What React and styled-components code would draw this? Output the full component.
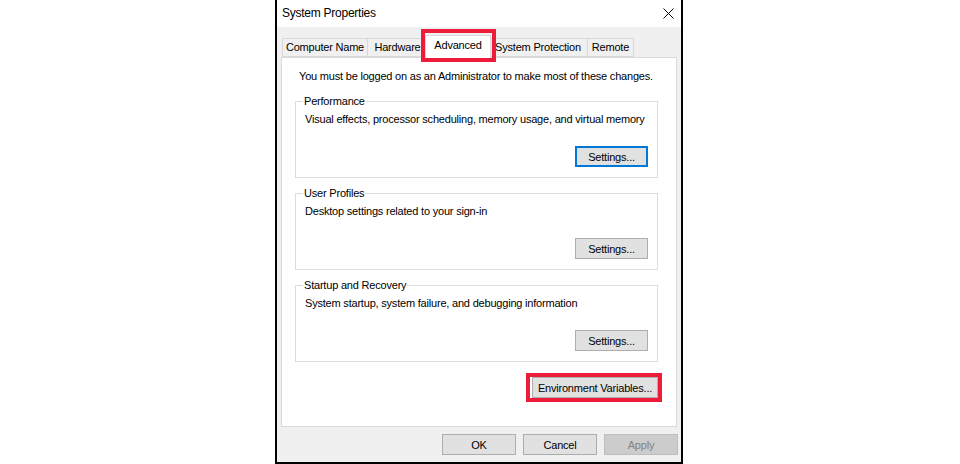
import styled, { createGlobalStyle } from 'styled-components';

const GlobalStyle = createGlobalStyle`
    html, body {
        margin: 0;
        padding: 0;
        background: #fff;
    }
    body {
        font-family: "Liberation Sans", Arial, sans-serif;
        font-size: 11px;
        letter-spacing: -0.2px;
        color: #000;
    }
`;

const Page = styled.div`
    width: 960px;
    height: 464px;
    padding-left: 275px;
    box-sizing: border-box;
    overflow: hidden;
`;

const Window = styled.div`
    width: 408px;
    height: 464px;
    box-sizing: border-box;
    border: 2px solid #000;
    border-top: none;
    background: #f0f0f0;
    display: flex;
    flex-direction: column;
`;

const TitleBar = styled.div`
    height: 27px;
    background: #fff;
    display: flex;
    align-items: center;
    justify-content: space-between;
    padding: 0 7px 0 5px;
`;

const Title = styled.span`
    font-size: 12px;
    letter-spacing: -0.25px;
    line-height: 15px;
`;

const Body = styled.div`
    flex: 1;
    display: flex;
    flex-direction: column;
    padding: 8px 4px 7px 4px;
`;

const TabRow = styled.div`
    display: flex;
    align-items: flex-end;
    height: 23px;
    padding-left: 1px;
    margin-bottom: -1px;
    position: relative;
    z-index: 1;
`;

const Tab = styled.div`
    position: relative;
    box-sizing: border-box;
    width: ${p => p.$w}px;
    height: ${p => (p.$active ? 23 : 19)}px;
    margin-bottom: ${p => (p.$active ? 0 : 1)}px;
    margin-left: ${p => (p.$first ? 0 : p.$active ? -3 : -1)}px;
    margin-right: ${p => (p.$active ? -2 : 0)}px;
    padding-bottom: ${p => (p.$active ? 4 : 1)}px;
    border: 1px solid #d9d9d9;
    border-bottom: ${p => (p.$active ? 'none' : '1px solid #d9d9d9')};
    background: ${p => (p.$active ? '#fff' : '#f0f0f0')};
    z-index: ${p => (p.$active ? 2 : 0)};
    display: flex;
    align-items: center;
    justify-content: center;
    white-space: nowrap;
    line-height: 15px;
`;

const Highlight = styled.span`
    position: absolute;
    left: ${p => p.$l}px;
    right: ${p => p.$r}px;
    top: ${p => p.$t}px;
    bottom: ${p => p.$b}px;
    border: 4px solid #ed1c3a;
    pointer-events: none;
`;

const Panel = styled.div`
    height: 370px;
    box-sizing: border-box;
    background: #fff;
    border: 1px solid #d9d9d9;
    padding: 11px 18px 0 13px;
    display: flex;
    flex-direction: column;
`;

const Notice = styled.p`
    margin: 0 0 0 4px;
    line-height: 15px;
    white-space: nowrap;
`;

const Group = styled.fieldset`
    margin: ${p => p.$top}px 0 0 0;
    padding: 0 9px 10px 9px;
    border: 1px solid #dcdcdc;
    min-width: 0;
    display: flex;
    flex-direction: column;
`;

const Legend = styled.legend`
    margin-left: -2px;
    padding: 0 1px;
    line-height: 16px;
`;

const Description = styled.p`
    margin: 3px 0 0 0;
    line-height: 15px;
    white-space: nowrap;
`;

const ButtonRow = styled.div`
    display: flex;
    justify-content: flex-end;
    margin-top: ${p => p.$top || 0}px;
    gap: 7px;
`;

const Button = styled.button`
    position: relative;
    box-sizing: border-box;
    width: ${p => p.$w || 74}px;
    height: 21px;
    padding: 0;
    font-family: "Liberation Sans", Arial, sans-serif;
    font-size: 11px;
    letter-spacing: -0.2px;
    white-space: nowrap;
    color: ${p => (p.disabled ? '#838383' : '#000')};
    background: ${p => (p.disabled ? '#cccccc' : '#e1e1e1')};
    border: ${p => (p.$focused ? '2px solid #0078d7' : p.disabled ? '1px solid #bfbfbf' : '1px solid #adadad')};
    border-radius: 0;
    outline: none;
`;

const Footer = styled.div`
    display: flex;
    justify-content: flex-end;
    gap: 7px;
    margin-top: 7px;
    margin-right: -1px;
`;

const CloseIcon = () => (
    <svg width="11" height="11" viewBox="0 0 11 11">
        <path d="M0.5 0.5 L10.5 10.5 M10.5 0.5 L0.5 10.5" stroke="#000" strokeWidth="1" fill="none" />
    </svg>
);

const tabs = [
    { label: 'Computer Name', w: 86 },
    { label: 'Hardware', w: 61 },
    { label: 'Advanced', w: 66, active: true },
    { label: 'System Protection', w: 100 },
    { label: 'Remote', w: 47 },
];

const groups = [
    { title: 'Performance', text: 'Visual effects, processor scheduling, memory usage, and virtual memory', focused: true, top: 9 },
    { title: 'User Profiles', text: 'Desktop settings related to your sign-in', top: 7 },
    { title: 'Startup and Recovery', text: 'System startup, system failure, and debugging information', top: 7 },
];

function App() {
    return <Page>
        <GlobalStyle />
        <Window>
            <TitleBar>
                <Title>System Properties</Title>
                <CloseIcon />
            </TitleBar>
            <Body>
                <TabRow>
                    {tabs.map((t, i) => (
                        <Tab key={t.label} $w={t.w} $active={t.active} $first={i === 0}>
                            {t.label}
                            {t.active && <Highlight $l={-5} $r={-6} $t={-7} $b={-4} />}
                        </Tab>
                    ))}
                </TabRow>
                <Panel>
                    <Notice>You must be logged on as an Administrator to make most of these changes.</Notice>
                    {groups.map(g => (
                        <Group key={g.title} $top={g.top}>
                            <Legend>{g.title}</Legend>
                            <Description>{g.text}</Description>
                            <ButtonRow $top={19}>
                                <Button $w={73} $focused={g.focused}>Settings...</Button>
                            </ButtonRow>
                        </Group>
                    ))}
                    <ButtonRow $top={15}>
                        <Button $w={126}>
                            Environment Variables...
                            <Highlight $l={-7} $r={-5} $t={-5} $b={-5} />
                        </Button>
                    </ButtonRow>
                </Panel>
                <Footer>
                    <Button>OK</Button>
                    <Button>Cancel</Button>
                    <Button disabled>Apply</Button>
                </Footer>
            </Body>
        </Window>
    </Page>
}

export default App;
